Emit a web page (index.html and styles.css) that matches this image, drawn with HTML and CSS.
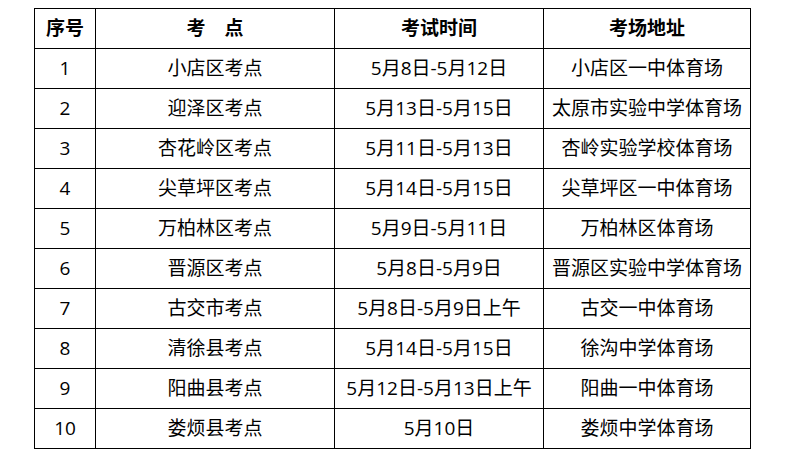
FILE: index.html
```html
<!DOCTYPE html>
<html lang="zh">
<head>
<meta charset="utf-8">
<link rel="stylesheet" href="styles.css">
</head>
<body>
<table class="exam">
  <colgroup>
    <col class="c1"><col class="c2"><col class="c3"><col class="c4">
  </colgroup>
  <thead>
    <tr><th>序号</th><th>考&emsp;点</th><th>考试时间</th><th>考场地址</th></tr>
  </thead>
  <tbody>
    <tr><td>1</td><td>小店区考点</td><td>5月8日-5月12日</td><td>小店区一中体育场</td></tr>
    <tr><td>2</td><td>迎泽区考点</td><td>5月13日-5月15日</td><td>太原市实验中学体育场</td></tr>
    <tr><td>3</td><td>杏花岭区考点</td><td>5月11日-5月13日</td><td>杏岭实验学校体育场</td></tr>
    <tr><td>4</td><td>尖草坪区考点</td><td>5月14日-5月15日</td><td>尖草坪区一中体育场</td></tr>
    <tr><td>5</td><td>万柏林区考点</td><td>5月9日-5月11日</td><td>万柏林区体育场</td></tr>
    <tr><td>6</td><td>晋源区考点</td><td>5月8日-5月9日</td><td>晋源区实验中学体育场</td></tr>
    <tr><td>7</td><td>古交市考点</td><td>5月8日-5月9日上午</td><td>古交一中体育场</td></tr>
    <tr><td>8</td><td>清徐县考点</td><td>5月14日-5月15日</td><td>徐沟中学体育场</td></tr>
    <tr><td>9</td><td>阳曲县考点</td><td>5月12日-5月13日上午</td><td>阳曲一中体育场</td></tr>
    <tr><td>10</td><td>娄烦县考点</td><td>5月10日</td><td>娄烦中学体育场</td></tr>
  </tbody>
</table>
</body>
</html>
```
FILE: styles.css
```css
html, body {
  margin: 0;
  background: #fff;
}
body {
  padding: 8px 0 0 34px;
  font-family: "Open Sans", "Noto Sans CJK SC", sans-serif;
  color: #000;
}
.exam {
  border-collapse: collapse;
  table-layout: fixed;
  width: 716px;
}
.c1 { width: 61px; }
.c2 { width: 239px; }
.c3 { width: 209px; }
.c4 { width: 207px; }
.exam th, .exam td {
  border: 1.5px solid #000;
  height: 40px;
  padding: 0;
  box-sizing: border-box;
  text-align: center;
  vertical-align: middle;
  font-size: 19px;
  line-height: 1;
  white-space: nowrap;
}
.exam th {
  font-weight: 700;
}
.exam td {
  font-weight: 400;
}
```
